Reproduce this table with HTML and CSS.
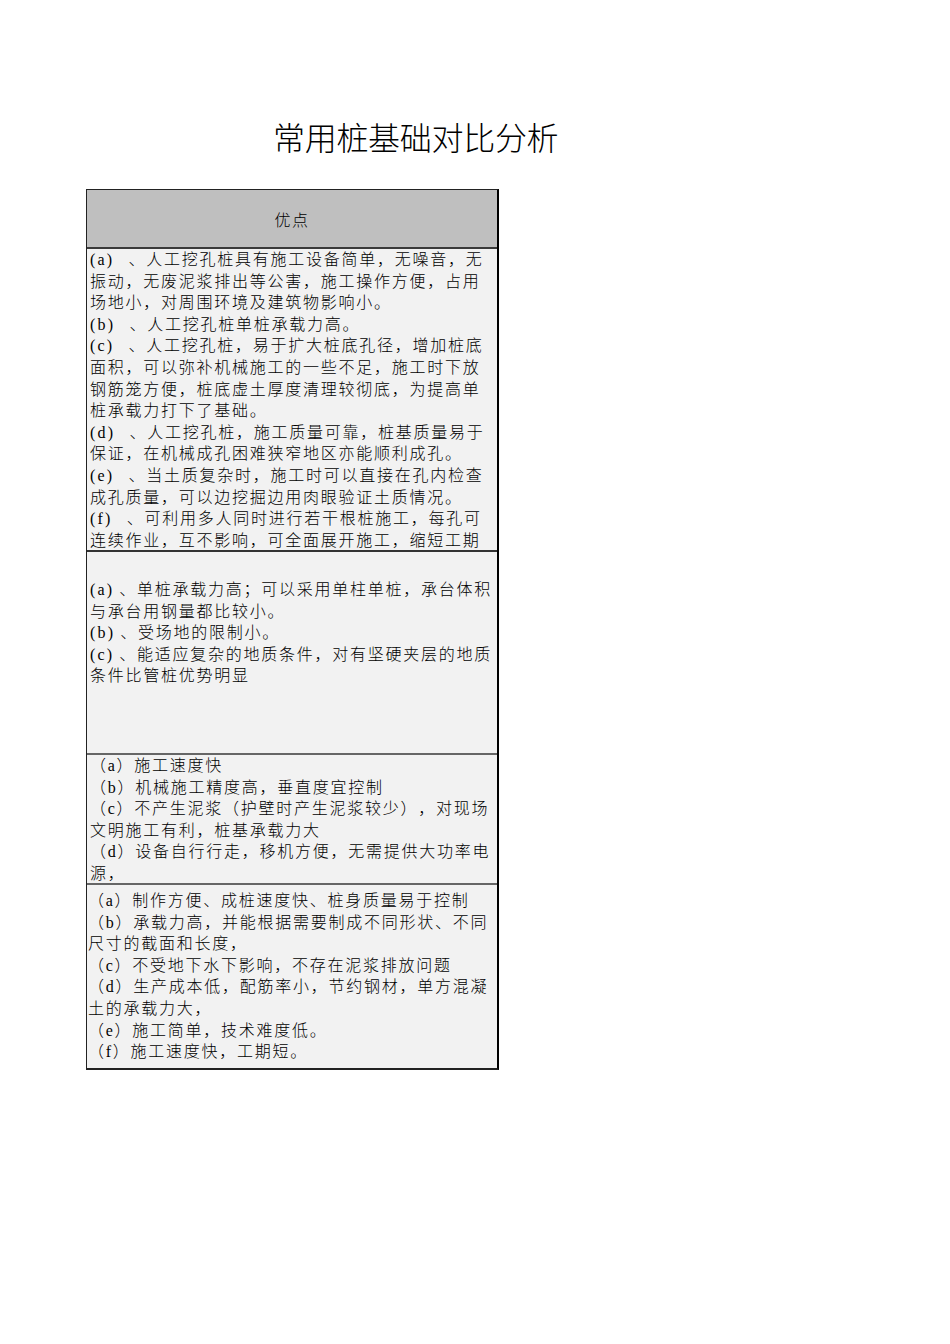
FILE: index.html
```html
<!DOCTYPE html>
<html lang="zh-CN">
<head>
<meta charset="utf-8">
<title>常用桩基础对比分析</title>
<link rel="stylesheet" href="styles.css">
</head>
<body>
<div class="page">
  <h1 class="title">常用桩基础对比分析</h1>
  <div class="table">
    <div class="head">优点</div>
    <div class="row row1">
      <div class="ln"><span class="lbl">(a) </span>、人工挖孔桩具有施工设备简单，无噪音，无</div>
      <div class="ln">振动，无废泥浆排出等公害，施工操作方便，占用</div>
      <div class="ln">场地小，对周围环境及建筑物影响小。</div>
      <div class="ln"><span class="lbl">(b) </span>、人工挖孔桩单桩承载力高。</div>
      <div class="ln"><span class="lbl">(c) </span>、人工挖孔桩，易于扩大桩底孔径，增加桩底</div>
      <div class="ln">面积，可以弥补机械施工的一些不足，施工时下放</div>
      <div class="ln">钢筋笼方便，桩底虚土厚度清理较彻底，为提高单</div>
      <div class="ln">桩承载力打下了基础。</div>
      <div class="ln"><span class="lbl">(d) </span>、人工挖孔桩，施工质量可靠，桩基质量易于</div>
      <div class="ln">保证，在机械成孔困难狭窄地区亦能顺利成孔。</div>
      <div class="ln"><span class="lbl">(e) </span>、当土质复杂时，施工时可以直接在孔内检查</div>
      <div class="ln">成孔质量，可以边挖掘边用肉眼验证土质情况。</div>
      <div class="ln"><span class="lbl">(f) </span>、可利用多人同时进行若干根桩施工，每孔可</div>
      <div class="ln">连续作业，互不影响，可全面展开施工，缩短工期</div>
    </div>
    <div class="row row2">
      <div class="ln"><span class="lbl2">(a)</span>、单桩承载力高；可以采用单柱单桩，承台体积</div>
      <div class="ln">与承台用钢量都比较小。</div>
      <div class="ln"><span class="lbl2">(b)</span>、受场地的限制小。</div>
      <div class="ln"><span class="lbl2">(c)</span>、能适应复杂的地质条件，对有坚硬夹层的地质</div>
      <div class="ln">条件比管桩优势明显</div>
    </div>
    <div class="row row3">
      <div class="ln">（a）施工速度快</div>
      <div class="ln">（b）机械施工精度高，垂直度宜控制</div>
      <div class="ln">（c）不产生泥浆（护壁时产生泥浆较少），对现场</div>
      <div class="ln">文明施工有利，桩基承载力大</div>
      <div class="ln">（d）设备自行行走，移机方便，无需提供大功率电</div>
      <div class="ln">源，</div>
    </div>
    <div class="row row4">
      <div class="ln">（a）制作方便、成桩速度快、桩身质量易于控制</div>
      <div class="ln">（b）承载力高，并能根据需要制成不同形状、不同</div>
      <div class="ln">尺寸的截面和长度，</div>
      <div class="ln">（c）不受地下水下影响，不存在泥浆排放问题</div>
      <div class="ln">（d）生产成本低，配筋率小，节约钢材，单方混凝</div>
      <div class="ln">土的承载力大，</div>
      <div class="ln">（e）施工简单，技术难度低。</div>
      <div class="ln">（f）施工速度快，工期短。</div>
    </div>
  </div>
</div>
</body>
</html>
```

FILE: styles.css
```css
html, body {
  margin: 0;
  padding: 0;
  background: #ffffff;
}

body {
  font-family: "Liberation Serif", "Noto Sans CJK SC", serif;
  color: #000000;
  text-spacing-trim: space-all;
  font-kerning: none;
}

.page {
  padding: 119px 0 0 86px;
}

.title {
  margin: 0 0 30px 187px;
  font-size: 32px;
  line-height: 40px;
  font-weight: 300;
  letter-spacing: -0.3px;
  color: #000000;
}

.table {
  width: 410px;
  border-top: 1px solid #222222;
  border-left: 1px solid #222222;
  border-right: 2px solid #000000;
  border-bottom: 2px solid #222222;
  background: #f2f2f2;
}

.head {
  height: 57px;
  background: #bfbfbf;
  border-bottom: 2px solid #3a3a3a;
  display: flex;
  align-items: center;
  justify-content: center;
  font-size: 16px;
  font-weight: 300;
  letter-spacing: 1.5px;
}

.row {
  box-sizing: border-box;
  overflow: hidden;
  padding-left: 3px;
  font-size: 16px;
  font-weight: 300;
  line-height: 21.6px;
  letter-spacing: 1.75px;
  white-space: nowrap;
}

.lbl {
  letter-spacing: 2.2px;
  margin-right: 8px;
}

.lbl2 {
  letter-spacing: 2.2px;
  margin-right: 5px;
}

.row1 {
  height: 303px;
  border-bottom: 2px solid #333333;
}

.row2 {
  height: 203px;
  padding-top: 27px;
  border-bottom: 2px solid #666666;
}

.row3 {
  height: 130px;
  border-bottom: 2px solid #666666;
}

.row4 {
  height: 183px;
  padding-top: 5px;
  padding-left: 1px;
}
```
